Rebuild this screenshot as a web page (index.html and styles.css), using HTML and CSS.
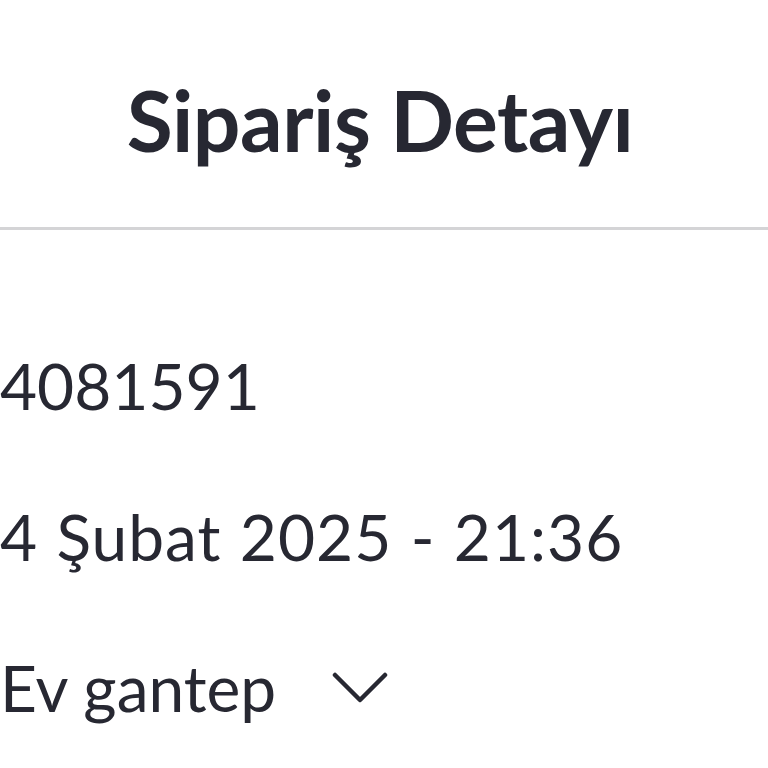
FILE: index.html
```html
<!DOCTYPE html>
<html lang="tr">
<head>
  <meta charset="UTF-8">
  <meta name="viewport" content="width=device-width, initial-scale=1">
  <title>Sipariş Detayı</title>
  <link rel="stylesheet" href="styles.css">
</head>
<body>
  <header class="page-header">
    <h1>Sipariş Detayı</h1>
  </header>

  <main class="order-detail">
    <div class="detail-row">4081591</div>
    <div class="detail-row detail-date">4 Şubat 2025 - 21:36</div>
    <div class="detail-row detail-select">
      <span>Ev gantep</span>
      <svg class="chevron" viewBox="0 0 56 32" width="56" height="32" aria-hidden="true">
        <path d="M3 3 L28 28 L53 3" fill="none" stroke="currentColor" stroke-width="4.5" stroke-linecap="round" stroke-linejoin="round"/>
      </svg>
    </div>
  </main>
</body>
</html>
```

FILE: styles.css
```css
/* Общие стили */
body {
    margin: 0;
    font-family: 'Lato', sans-serif;
    background: #ffffff;
    color: #272832;
}

/* Шапка */
.page-header {
    height: 230px;
    padding-top: 12px;
    box-sizing: border-box;
    display: flex;
    align-items: center;
    justify-content: center;
    border-bottom: 3px solid #d4d4d6;
}

.page-header h1 {
    margin: 0 8px 0 0;
    font-size: 84px;
    font-weight: 700;
    letter-spacing: -0.5px;
    color: #272832;
}

/* Детали заказа */
.order-detail {
    padding-top: 80px;
}

.detail-row {
    height: 151px;
    display: flex;
    align-items: center;
    font-size: 64px;
    font-weight: 400;
    white-space: nowrap;
}

.detail-date {
    letter-spacing: 1px;
    word-spacing: 1px;
}

.detail-select {
    gap: 56px;
}

.chevron {
    color: #272832;
}
```
